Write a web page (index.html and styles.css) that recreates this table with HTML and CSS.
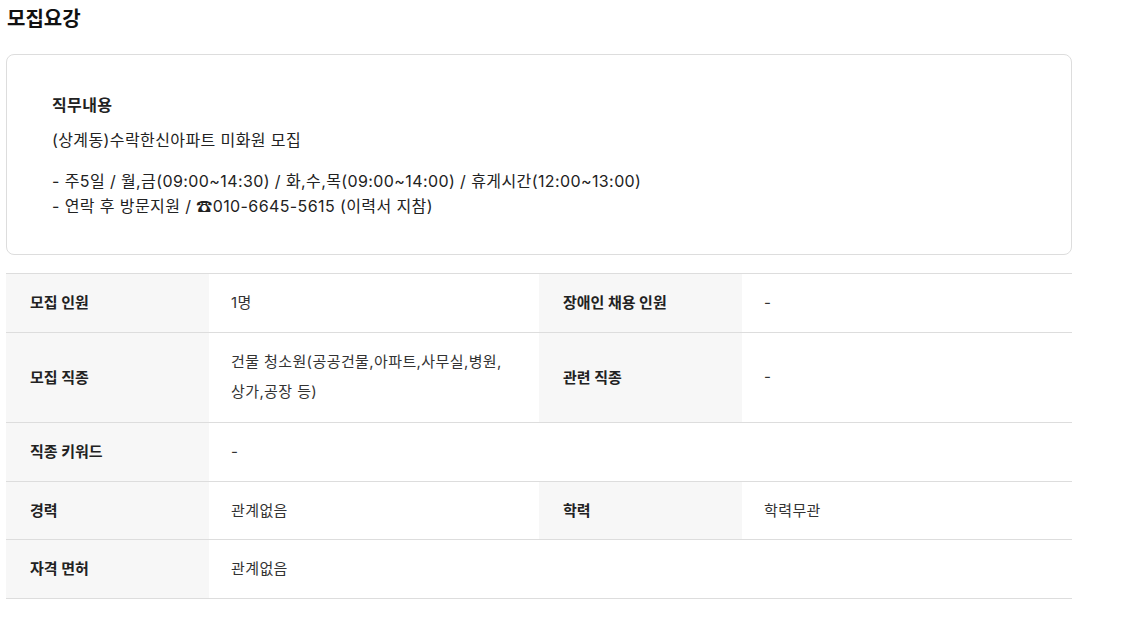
FILE: index.html
```html
<!DOCTYPE html>
<html lang="ko">
<head>
<meta charset="utf-8">
<link rel="stylesheet" href="styles.css">
</head>
<body>
<section class="recruit">
  <h2 class="title">모집요강</h2>
  <div class="job-box">
    <h3 class="job-title">직무내용</h3>
    <p class="job-line">(상계동)수락한신아파트 미화원 모집</p>
    <p class="job-list">- 주5일 / 월,금(09:00~14:30) / 화,수,목(09:00~14:00) / 휴게시간(12:00~13:00)<br>- 연락 후 방문지원 / ☎010-6645-5615 (이력서 지참)</p>
  </div>
  <table class="info">
    <colgroup><col class="c-th"><col class="c-td"><col class="c-th"><col class="c-td"></colgroup>
    <tr><th>모집 인원</th><td>1명</td><th>장애인 채용 인원</th><td>-</td></tr>
    <tr class="tall"><th>모집 직종</th><td>건물 청소원(공공건물,아파트,사무실,병원,<br>상가,공장 등)</td><th>관련 직종</th><td>-</td></tr>
    <tr><th>직종 키워드</th><td colspan="3">-</td></tr>
    <tr class="short"><th>경력</th><td>관계없음</td><th>학력</th><td>학력무관</td></tr>
    <tr><th>자격 면허</th><td colspan="3">관계없음</td></tr>
  </table>
</section>
</body>
</html>
```
FILE: styles.css
```css
* { box-sizing: border-box; }
body {
  margin: 0;
  background: #fff;
  color: #222;
  font-family: Inter, "Noto Sans CJK KR", sans-serif;
}
.recruit {
  width: 1066px;
  margin-left: 6px;
}
.title {
  margin: 0;
  padding: 4px 0 0 1px;
  font-size: 20px;
  line-height: 30px;
  font-weight: 700;
  color: #111;
}
.job-box {
  margin-top: 20px;
  border: 1px solid #ddd;
  border-radius: 8px;
  padding: 39px 45px 34px;
  height: 201px;
  letter-spacing: 0.4px;
}
.job-title {
  margin: 0;
  font-size: 16px;
  line-height: 22px;
  font-weight: 700;
}
.job-line {
  margin: 13px 0 0;
  font-size: 16px;
  line-height: 22px;
}
.job-list {
  margin: 18px 0 0;
  font-size: 16px;
  line-height: 25px;
}
.info {
  margin-top: 18px;
  width: 1066px;
  border-collapse: collapse;
  table-layout: fixed;
  border-top: 1px solid #ddd;
  font-size: 15px;
}
.c-th { width: 203px; }
.c-td { width: 330px; }
.info th, .info td {
  border-bottom: 1px solid #ddd;
  padding: 14px 22px;
  line-height: 30px;
  text-align: left;
  vertical-align: middle;
}
.info .tall td { padding-bottom: 15px; }
.info .short th, .info .short td { padding-top: 14px; padding-bottom: 13px; }
.info th {
  background: #f7f7f7;
  font-weight: 700;
  padding-left: 24px;
  color: #222;
}
.info td {
  font-weight: 400;
  color: #333;
  letter-spacing: 0.4px;
}
```
